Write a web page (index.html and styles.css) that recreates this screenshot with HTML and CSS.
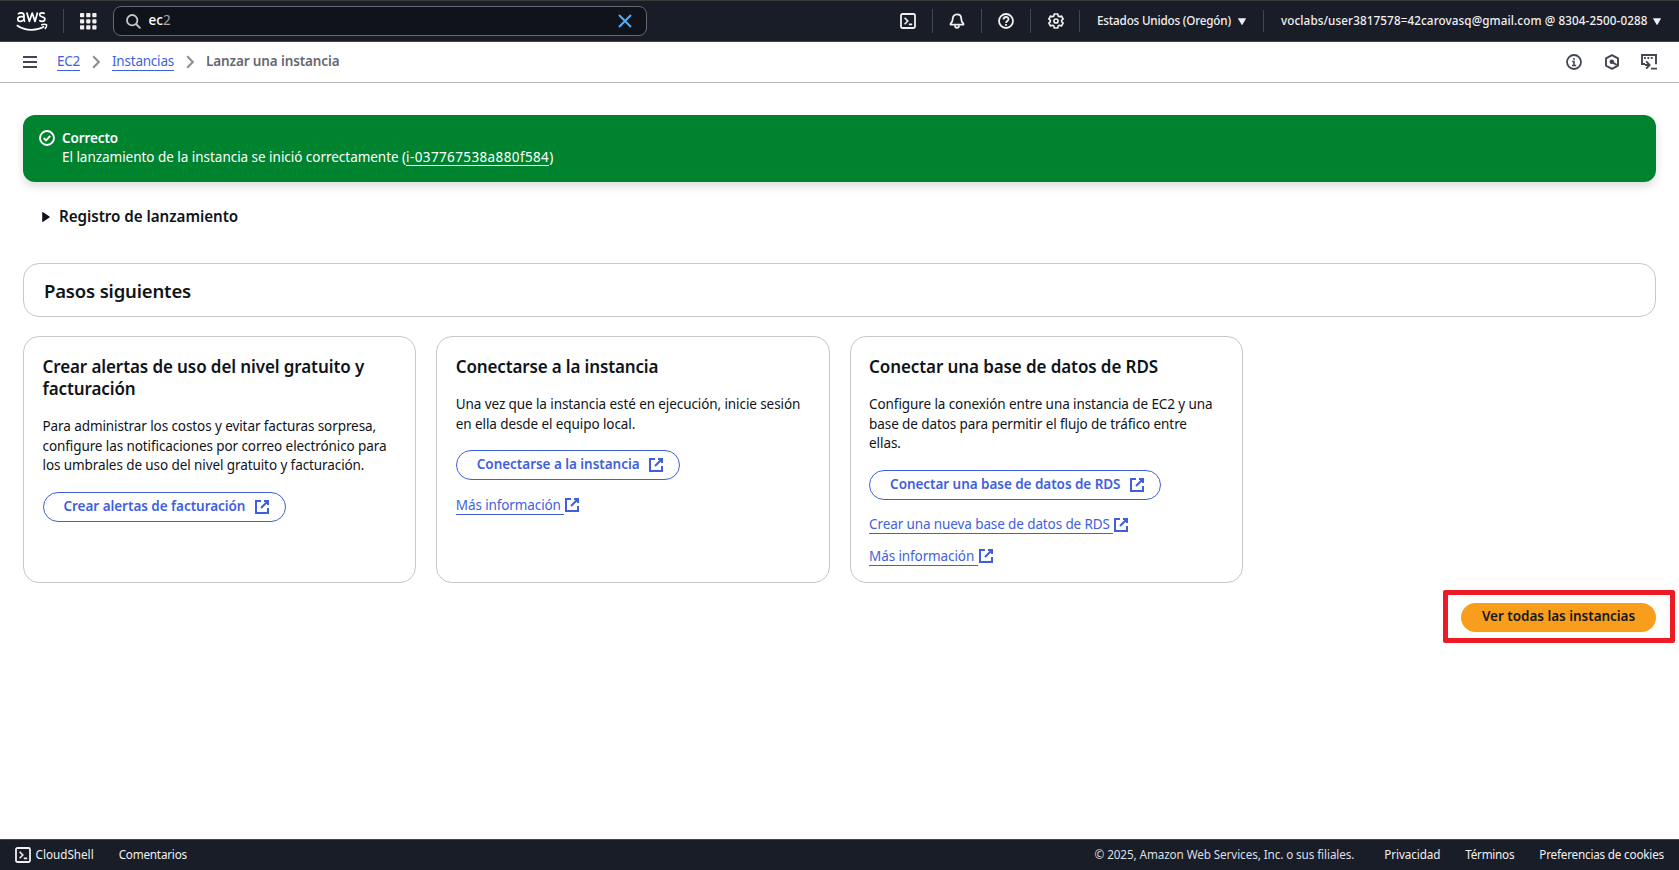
FILE: index.html
```
<!DOCTYPE html>
<html lang="es">
<head>
<meta charset="utf-8">
<title>Lanzar una instancia | EC2</title>
<link rel="stylesheet" href="styles.css">
</head>
<body>
<svg class="defs" aria-hidden="true">
  <symbol id="external" viewBox="0 0 16 16"><path d="M10 2h4v4M7 9l7-7M14 9.05V14H2V2h5" fill="none" stroke="currentColor" stroke-width="2"/></symbol>
  <symbol id="shell" viewBox="0 0 16 16"><rect x="1" y="1" width="14" height="14" rx="1.5" fill="none" stroke="currentColor" stroke-width="1.8"/><path d="M4.6 4.8 7.8 8l-3.2 3.2M8.8 11.4h3.4" fill="none" stroke="currentColor" stroke-width="1.6"/></symbol>
  <symbol id="caret" viewBox="0 0 8 7"><path d="M.3.2h7.4a.3.3 0 0 1 .2.5L4.4 6.7a.4.4 0 0 1-.7 0L.1.7A.3.3 0 0 1 .3.2z" fill="currentColor"/></symbol>
  <symbol id="chevron" viewBox="0 0 8 14"><path d="m1.2 1.2 5.6 5.8-5.6 5.8" fill="none" stroke="currentColor" stroke-width="2"/></symbol>
</svg>
<header class="topnav">
  <div class="topnav-logo">
    <svg width="32" height="21" viewBox="0 0 32 21" fill="none" stroke="#fff" stroke-width="1.7" stroke-linejoin="round">
      <path d="M2 3.1Q3.3 1.9 5.2 1.9Q8 1.9 8 4.8V8.1Q8 9.7 8.9 10.7M8 5.9Q6.6 5.5 5 5.6Q1.8 5.8 1.8 8.3Q1.8 10.4 4.2 10.4Q6.9 10.4 8 8"/>
      <path d="m10.8 1.5 2.6 8.9 2.8-8.3 2.8 8.3 2.5-8.9"/>
      <path d="M28.7 2.8Q27.5 1.9 26 1.9Q23.7 1.9 23.7 3.8Q23.7 5.2 26 5.8Q28.9 6.4 28.9 8.1Q28.9 10.4 26 10.4Q24.5 10.4 23.2 9.4"/>
      <path d="M.8 14.2Q7 18.8 15.7 18.8Q23 18.8 28.2 15.6" stroke-width="1.8"/>
      <path d="M25.2 14Q28.3 12.9 30.6 13.7Q31.1 15.7 28.9 18" stroke-width="1.5"/>
    </svg>
  </div>
  <div class="topnav-apps">
    <svg width="17" height="17" viewBox="0 0 17 17" fill="#f0f0f2"><rect width="4.2" height="4.2" rx=".8"/><rect x="6.2" width="4.2" height="4.2" rx=".8"/><rect x="12.3" width="4.2" height="4.2" rx=".8"/><rect y="6.2" width="4.2" height="4.2" rx=".8"/><rect x="6.2" y="6.2" width="4.2" height="4.2" rx=".8"/><rect x="12.3" y="6.2" width="4.2" height="4.2" rx=".8"/><rect y="12.3" width="4.2" height="4.2" rx=".8"/><rect x="6.2" y="12.3" width="4.2" height="4.2" rx=".8"/><rect x="12.3" y="12.3" width="4.2" height="4.2" rx=".8"/></svg>
  </div>
  <div class="search">
    <svg width="15" height="15" viewBox="0 0 15 15" fill="none" stroke="#c6c6cd" stroke-width="1.8"><circle cx="6.2" cy="6.2" r="5.2"/><path d="m10 10 4.4 4.4"/></svg>
    <span class="search-text">ec<span class="typed-hint">2</span></span>
    <svg class="search-clear" width="14" height="14" viewBox="0 0 14 14" fill="none" stroke="#53aef8" stroke-width="2"><path d="m1 1 12 12M13 1 1 13"/></svg>
  </div>
  <nav class="tools">
    <div class="tool tool-first"><svg width="16" height="16"><use href="#shell"/></svg></div>
    <div class="tool"><svg width="16" height="16" viewBox="0 0 16 16" fill="none" stroke="currentColor" stroke-width="1.8" stroke-linejoin="round"><path d="M8 1.3c-2.6 0-4.2 1.9-4.2 4.2 0 3-.9 3.9-2.2 5.2-.3.4-.1.9.4.9h12c.5 0 .7-.5.4-.9-1.3-1.3-2.2-2.2-2.2-5.2C12.2 3.2 10.6 1.3 8 1.3z"/><path d="M6 12.3c0 3.5 4 3.5 4 0"/></svg></div>
    <div class="tool"><svg width="16" height="16" viewBox="0 0 16 16" fill="none" stroke="currentColor" stroke-width="1.8"><circle cx="8" cy="8" r="7"/><path d="M5.5 6.5C5.5 3.2 10.5 3.2 10.5 6.2C10.5 8 8 7.9 8 10"/><path d="M8 11.1v1.7"/></svg></div>
    <div class="tool tool-gear"><svg width="16" height="16" viewBox="0 0 16 16" fill="none" stroke="currentColor" stroke-width="1.7" stroke-linejoin="round"><path d="M6.3 1h3.4l.5 2 1.2.7 2-.7 1.7 2.9L13.7 7.3v1.4l1.4 1.4L13.4 13l-2-.7-1.2.7-.5 2H6.3l-.5-2-1.2-.7-2 .7L.9 10.1l1.4-1.4V7.3L.9 5.9 2.6 3l2 .7L5.8 3z"/><circle cx="8" cy="8" r="2"/></svg></div>
    <div class="menu region"><span>Estados Unidos (Oregón)</span><svg width="8" height="7"><use href="#caret"/></svg></div>
    <div class="menu account"><span>voclabs/user3817578=42carovasq@gmail.com @ 8304-2500-0288</span><svg width="8" height="7"><use href="#caret"/></svg></div>
  </nav>
</header>
<div class="crumbbar">
  <svg class="burger" width="14" height="12" viewBox="0 0 14 12"><path d="M0 1h14M0 6h14M0 11h14" stroke="#424650" stroke-width="2"/></svg>
  <nav class="crumbs">
    <a class="crumb crumb-ec2">EC2</a>
    <svg width="8" height="14"><use href="#chevron"/></svg>
    <a class="crumb crumb-inst">Instancias</a>
    <svg width="8" height="14"><use href="#chevron"/></svg>
    <span class="crumb-current">Lanzar una instancia</span>
  </nav>
  <div class="panels">
    <svg width="16" height="16" viewBox="0 0 16 16" fill="none" stroke="currentColor" stroke-width="1.8"><circle cx="8" cy="8" r="7"/><path d="M8 4v1.8M6.200 7.5H8v4M6 11.5h4.2" stroke-width="1.6"/></svg>
    <svg width="16" height="16" viewBox="0 0 16 16" fill="none" stroke="currentColor" stroke-width="1.9" stroke-linejoin="round"><path d="m8 1.100 6 3.300v7.200l-6 3.300-6-3.300V4.400z"/><circle cx="7.800" cy="7.800" r="2.300" fill="currentColor" stroke="none"/><path d="m8 8 4.800 3"/></svg>
    <svg width="16" height="16" viewBox="0 0 16 16" fill="none" stroke="currentColor" stroke-width="1.9"><path d="M4 10H1V1h14v9.200M4 11h4M5.200 7.400 8.600 11l-3.400 3.600M10 14.600h6M3 4h1.800M6.400 4h1.800M9.800 4h1.800"/></svg>
  </div>
</div>
<main class="content">
  <section class="alert">
    <svg width="16" height="16" viewBox="0 0 16 16" fill="none" stroke="#fff" stroke-width="1.9"><circle cx="8" cy="8" r="7"/><path d="m4.700 8 2.300 2.300 4.200-4.500"/></svg>
    <div class="alert-body">
      <div class="alert-title">Correcto</div>
      <div class="alert-text">El lanzamiento de la instancia se inició correctamente (<a>i-037767538a880f584</a>)</div>
    </div>
  </section>
  <div class="log">
    <svg width="8" height="10" viewBox="0 0 8 10"><path d="M.2.5A.4.4 0 0 1 .8.1l6.700 4.500a.5.5 0 0 1 0 .8L.8 9.900a.4.4 0 0 1-.6-.4z" fill="#0f141a"/></svg>
    <span>Registro de lanzamiento</span>
  </div>
  <section class="next"><h2>Pasos siguientes</h2></section>
  <div class="cards">
    <article class="card">
      <h3>Crear alertas de uso del nivel gratuito y<br>facturación</h3>
      <p>Para administrar los costos y evitar facturas sorpresa,<br>configure las notificaciones por correo electrónico para<br>los umbrales de uso del nivel gratuito y facturación.</p>
      <a class="btn"><span>Crear alertas de facturación</span><svg width="16" height="16"><use href="#external"/></svg></a>
    </article>
    <article class="card">
      <h3 class="t-connect">Conectarse a la instancia</h3>
      <p>Una vez que la instancia esté en ejecución, inicie sesión<br>en ella desde el equipo local.</p>
      <a class="btn"><span>Conectarse a la instancia</span><svg width="16" height="16"><use href="#external"/></svg></a>
      <a class="link"><span>Más información&nbsp;</span><svg width="16" height="16"><use href="#external"/></svg></a>
    </article>
    <article class="card">
      <h3>Conectar una base de datos de RDS</h3>
      <p>Configure la conexión entre una instancia de EC2 y una<br>base de datos para permitir el flujo de tráfico entre<br>ellas.</p>
      <a class="btn btn-rds"><span>Conectar una base de datos de RDS</span><svg width="16" height="16"><use href="#external"/></svg></a>
      <a class="link"><span>Crear una nueva base de datos de RDS&nbsp;</span><svg width="16" height="16"><use href="#external"/></svg></a>
      <a class="link"><span>Más información&nbsp;</span><svg width="16" height="16"><use href="#external"/></svg></a>
    </article>
  </div>
  <div class="actions"><div class="highlight"><a class="btn-primary">Ver todas las instancias</a></div></div>
</main>
<footer class="footer">
  <svg width="16" height="16"><use href="#shell"/></svg>
  <span class="f-shell">CloudShell</span>
  <span class="f-feedback">Comentarios</span>
  <span class="f-copy">© 2025, Amazon Web Services, Inc. o sus filiales.</span>
  <span class="f-privacy">Privacidad</span>
  <span class="f-terms">Términos</span>
  <span class="f-cookies">Preferencias de cookies</span>
</footer>
</body>
</html>
```
FILE: styles.css
```
* { box-sizing: border-box; }
html, body { height: 100%; }
body {
  margin: 0;
  display: flex;
  flex-direction: column;
  background: #fff;
  color: #0f141a;
  font: 13.5px/19.5px "Noto Sans", "Open Sans", sans-serif;
  white-space: nowrap;
}
svg { flex: none; display: block; }
.defs { position: absolute; width: 0; height: 0; }
h2, h3, p { margin: 0; }

/* Top navigation */
.topnav {
  height: 42px;
  flex: none;
  display: flex;
  align-items: center;
  background: #191d27;
  border-top: 1px solid #3b3b3b;
  border-bottom: 1px solid #424650;
  color: #f0f0f2;
}
.topnav-logo {
  width: 64px;
  height: 24px;
  padding: 2px 0 0 16px;
  border-right: 1px solid #424650;
}
.topnav-apps { width: 49px; padding-left: 16px; }
.search {
  width: 534px;
  height: 30px;
  margin-right: 253px;
  padding: 0 14px 0 12px;
  display: flex;
  align-items: center;
  border: 1px solid #656871;
  border-radius: 8px;
  background: #10131a;
}
.search-text { margin-left: 7.5px; margin-top: -1px; font-size: 13.5px; color: #fff; font-weight: 500; }
.typed-hint { color: #a4a4ad; font-weight: 400; }
.search-clear { margin-left: auto; }
.tools { display: flex; align-items: center; }
.tool {
  width: 49px;
  height: 24px;
  padding-left: 16px;
  display: flex;
  align-items: center;
  border-right: 1px solid #424650;
}
.tool-first { width: 33px; padding-left: 0; }
.tool-gear { padding-left: 17px; height: 22px; }
.menu {
  height: 22px;
  display: flex;
  align-items: center;
  font-size: 11.7px;
  font-weight: 500;
}
.menu span { margin-top: -1px; }
.region { width: 184px; padding-left: 17px; border-right: 1px solid #424650; letter-spacing: -.19px; }
.region span { width: 141px; }
.account { padding-left: 17px; letter-spacing: .1px; }
.account span { width: 372px; }

/* Breadcrumb bar */
.crumbbar {
  height: 41px;
  flex: none;
  display: flex;
  align-items: center;
  padding: 0 22px 1px 23px;
  border-bottom: 1px solid #b4b4bb;
}
.crumbs { display: flex; align-items: center; margin-left: 20px; color: #8c8c94; }
.crumb {
  height: 19px;
  line-height: 18.5px;
  color: #3f5fdf;
  border-bottom: 1px solid #3f5fdf;
}
.crumb-ec2 { width: 23px; margin: 0 12px 0 0; letter-spacing: -.3px; }
.crumb-inst { width: 62px; margin: 0 12px; letter-spacing: -.22px; }
.crumb-current { margin: 0 0 0 12px; color: #656871; font-weight: 600; letter-spacing: -.12px; }
.panels { margin-left: auto; display: flex; gap: 22px; color: #424650; }
.panels svg:last-child { margin-left: -1px; }

/* Page content */
.content { flex: 1; padding: 32px 23px 0; }
.alert {
  height: 67px;
  padding: 13px 16px;
  display: flex;
  gap: 7px;
  border-radius: 12px;
  background: #00832f;
  box-shadow: 0 4px 10px rgba(0, 7, 22, .14);
  color: #fff;
}
.alert svg { margin-top: 2px; }
.alert-title { height: 19.5px; line-height: 21px; font-weight: 600; letter-spacing: -.1px; }
.alert-text { letter-spacing: -.03px; }
.alert-text a { display: inline-block; height: 18px; line-height: 19px; border-bottom: 1px solid #fff; letter-spacing: .38px; }
.log {
  height: 24px;
  margin: 23px 0 34px;
  padding-left: 19px;
  display: flex;
  align-items: center;
  font-size: 15.2px;
  font-weight: 600;
  letter-spacing: -.045px;
}
.log span { margin: -1px 0 0 9px; }
.next {
  height: 54px;
  padding: 1px 20px 0;
  display: flex;
  align-items: center;
  border: 1px solid #c6c6cd;
  border-radius: 16px;
}
.next h2 { font-size: 18.5px; line-height: 25px; font-weight: 600; letter-spacing: -.17px; }

.cards {
  margin-top: 19px;
  display: grid;
  grid-template-columns: repeat(3, 393.3px);
  grid-template-rows: 247px;
  gap: 20px;
}
.card {
  padding: 19px 18.5px 0;
  display: flex;
  flex-direction: column;
  align-items: flex-start;
  border: 1px solid #c6c6cd;
  border-radius: 16px;
}
.card h3 { font-size: 17px; line-height: 22px; font-weight: 600; letter-spacing: -.1px; }
.card h3.t-connect { letter-spacing: -.15px; }
.card p { margin: 17px 0 16px; letter-spacing: -.09px; }
.btn {
  height: 30px;
  padding: 0 15px 0 20px;
  display: flex;
  align-items: center;
  gap: 8.5px;
  border: 1px solid #3f5fdf;
  border-radius: 15px;
  color: #3f5fdf;
  font-weight: 600;
  letter-spacing: -.04px;
}
.btn span { margin-top: -.4px; }
.btn-rds { letter-spacing: -.05px; }
.link { height: 19.5px; margin-top: 15.5px; display: flex; color: #3f5fdf; letter-spacing: -.11px; }
.link + .link { margin-top: 12px; }
.link span { height: 19px; border-bottom: 1px solid #3f5fdf; }
.link svg { margin-top: 1.5px; }

.actions { display: flex; justify-content: flex-end; padding-top: 20px; }
.highlight { position: relative; }
/* Red frame drawn over the area around the button */
.highlight::after {
  content: "";
  position: absolute;
  inset: -13.5px -18.5px -10.5px -18.5px;
  border: 5px solid #ed1c24;
  border-radius: 2px;
}
.btn-primary {
  width: 195px;
  height: 29px;
  display: block;
  border-radius: 15px;
  background: #f99d1c;
  color: #16191f;
  line-height: 27px;
  text-align: center;
  font-weight: 600;
  letter-spacing: -.03px;
}

/* Footer */
.footer {
  height: 31px;
  flex: none;
  display: flex;
  align-items: center;
  padding: 0 15px;
  border-top: 1px solid #424650;
  background: #191d27;
  color: #f0f0f2;
  font-size: 11.7px;
}
.f-shell { margin-left: 4.5px; }
.f-feedback { margin-left: 25px; letter-spacing: -.2px; }
.f-copy { margin-left: auto; color: #dedee3; letter-spacing: -.09px; }
.f-privacy { margin-left: 30px; letter-spacing: -.1px; }
.f-terms { margin-left: 25px; letter-spacing: -.25px; }
.f-cookies { margin-left: 25px; letter-spacing: -.19px; }
```
